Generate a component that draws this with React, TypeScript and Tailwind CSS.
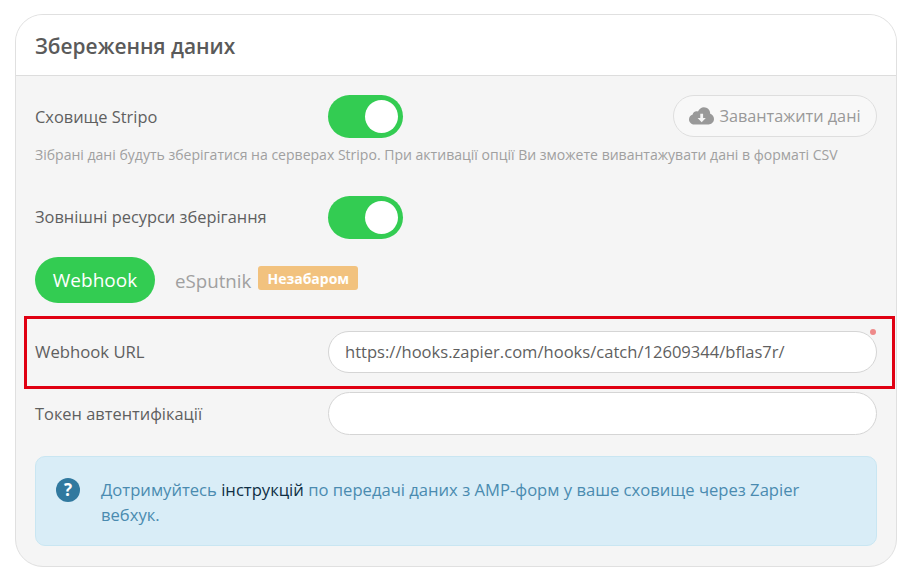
import React from "react";

function Toggle() {
  return (
    <div className="flex h-[43px] w-[75px] shrink-0 items-center justify-end rounded-full bg-[#33cc52] pr-[5px]">
      <div className="h-[33px] w-[33px] rounded-full bg-white" />
    </div>
  );
}

function CloudIcon() {
  return (
    <svg width="25" height="18" viewBox="0 0 25 18" className="shrink-0">
      <path
        d="M5.5 17.5C2.5 17.5 0 15.2 0 12.4c0-2.3 1.5-4.2 3.7-4.9C3.9 5.6 5.5 4.3 7.4 4.3c.6 0 1.1.1 1.6.3C10.100 2 12.400.3 14.900.3c3.500 0 6.300 2.800 6.300 6.200v.3c2.200.800 3.800 2.900 3.800 5.300 0 3.100-2.500 5.400-5.500 5.400z"
        fill="#999999"
      />
      <path d="M11.300 6.800h2.800v4.300h2.700l-4.100 4.200-4.100-4.200h2.700z" fill="#f5f5f5" />
    </svg>
  );
}

export default function App() {
  return (
    <div
      className="relative h-[578px] w-[918px] overflow-hidden bg-white pl-[15px] pt-[14px]"
      style={{ fontFamily: '"Open Sans", "Noto Sans", sans-serif' }}
    >
      <div className="h-[553px] w-[882px] overflow-hidden rounded-[28px] border border-[#e0e0e0] bg-[#f5f5f5]">
        <div className="flex h-[61px] items-center border-b border-[#dddddd] bg-white pl-[19px]">
          <h1 className="mt-[2px] text-[20.9px] font-semibold leading-none text-[#5a5a5a]">Збереження даних</h1>
        </div>

        <div className="pl-[19px] pr-[19px] pt-[19px]">
          <div className="flex h-[43px] items-center">
            <div className="w-[293px] shrink-0 pt-[1px] text-[16.4px] text-[#5f5f5f]">Сховище Stripo</div>
            <Toggle />
            <button className="mb-[1px] ml-auto flex h-[42px] w-[204px] items-center justify-center gap-[5px] rounded-full border border-[#dedede] bg-[#f8f8f8] text-[16.25px] text-[#999999]">
              <CloudIcon />
              <span>Завантажити дані</span>
            </button>
          </div>
          <p className="mt-[7px] whitespace-nowrap text-[14.04px] leading-[20px] text-[#a0a0a0]">
            Зібрані дані будуть зберігатися на серверах Stripo. При активації опції Ви зможете вивантажувати дані в форматі CSV
          </p>

          <div className="mt-[31px] flex h-[43px] items-center">
            <div className="w-[293px] shrink-0 text-[16.4px] text-[#5f5f5f]">Зовнішні ресурси зберігання</div>
            <Toggle />
          </div>

          <div className="mt-[18px] flex h-[46px] items-center">
            <div className="flex h-[46px] w-[120px] items-center justify-center rounded-full bg-[#33cc52] pt-[1px] text-[19px] text-white">
              Webhook
            </div>
            <span className="ml-[20px] mt-[2px] text-[18.7px] text-[#a0a0a0]">eSputnik</span>
            <span className="mb-[4px] ml-[7px] flex h-[24px] w-[100px] items-center justify-center rounded-[3px] bg-[#f2c27e] text-[14px] font-bold text-white">
              Незабаром
            </span>
          </div>

          <div className="mt-[28px] flex h-[42px] items-center">
            <div className="w-[293px] shrink-0 text-[16.7px] text-[#5f5f5f]">Webhook URL</div>
            <div className="flex h-[42px] flex-1 items-center rounded-full border border-[#d5d5d5] bg-white pl-[16px] text-[16.57px] text-[#5f5f5f]">
              https://hooks.zapier.com/hooks/catch/12609344/bflas7r/
            </div>
          </div>

          <div className="mt-[19px] flex h-[43px] items-center">
            <div className="w-[293px] shrink-0 pt-[1px] text-[16.4px] text-[#5f5f5f]">Токен автентифікації</div>
            <div className="h-[43px] flex-1 rounded-full border border-[#d5d5d5] bg-white" />
          </div>

          <div className="mt-[21px] flex h-[90px] rounded-[10px] border border-[#c9e6f2] bg-[#d9edf7] pl-[20px] pr-[40px] pt-[20px]">
            <svg width="24" height="24" viewBox="0 0 24 24" className="mt-[1px] shrink-0">
              <circle cx="12" cy="12" r="12" fill="#31799f" />
              <text x="12" y="18" textAnchor="middle" fontSize="17" fontWeight="700" fill="#ffffff" fontFamily="Open Sans, sans-serif">?</text>
            </svg>
            <p className="ml-[21px] text-[16.62px] leading-[25px] text-[#4a8bb0]">
              Дотримуйтесь <a className="text-[#0f2f45]">інструкцій</a> по передачі даних з AMP-форм у ваше сховище через Zapier вебхук.
            </p>
          </div>
        </div>
      </div>

      <div className="absolute left-[24px] top-[316px] h-[73px] w-[871px] border-[3px] border-[#e00012]" />
      <div className="absolute left-[870px] top-[329px] h-[6px] w-[6px] rounded-full bg-[#ee8a8a]" />
    </div>
  );
}
